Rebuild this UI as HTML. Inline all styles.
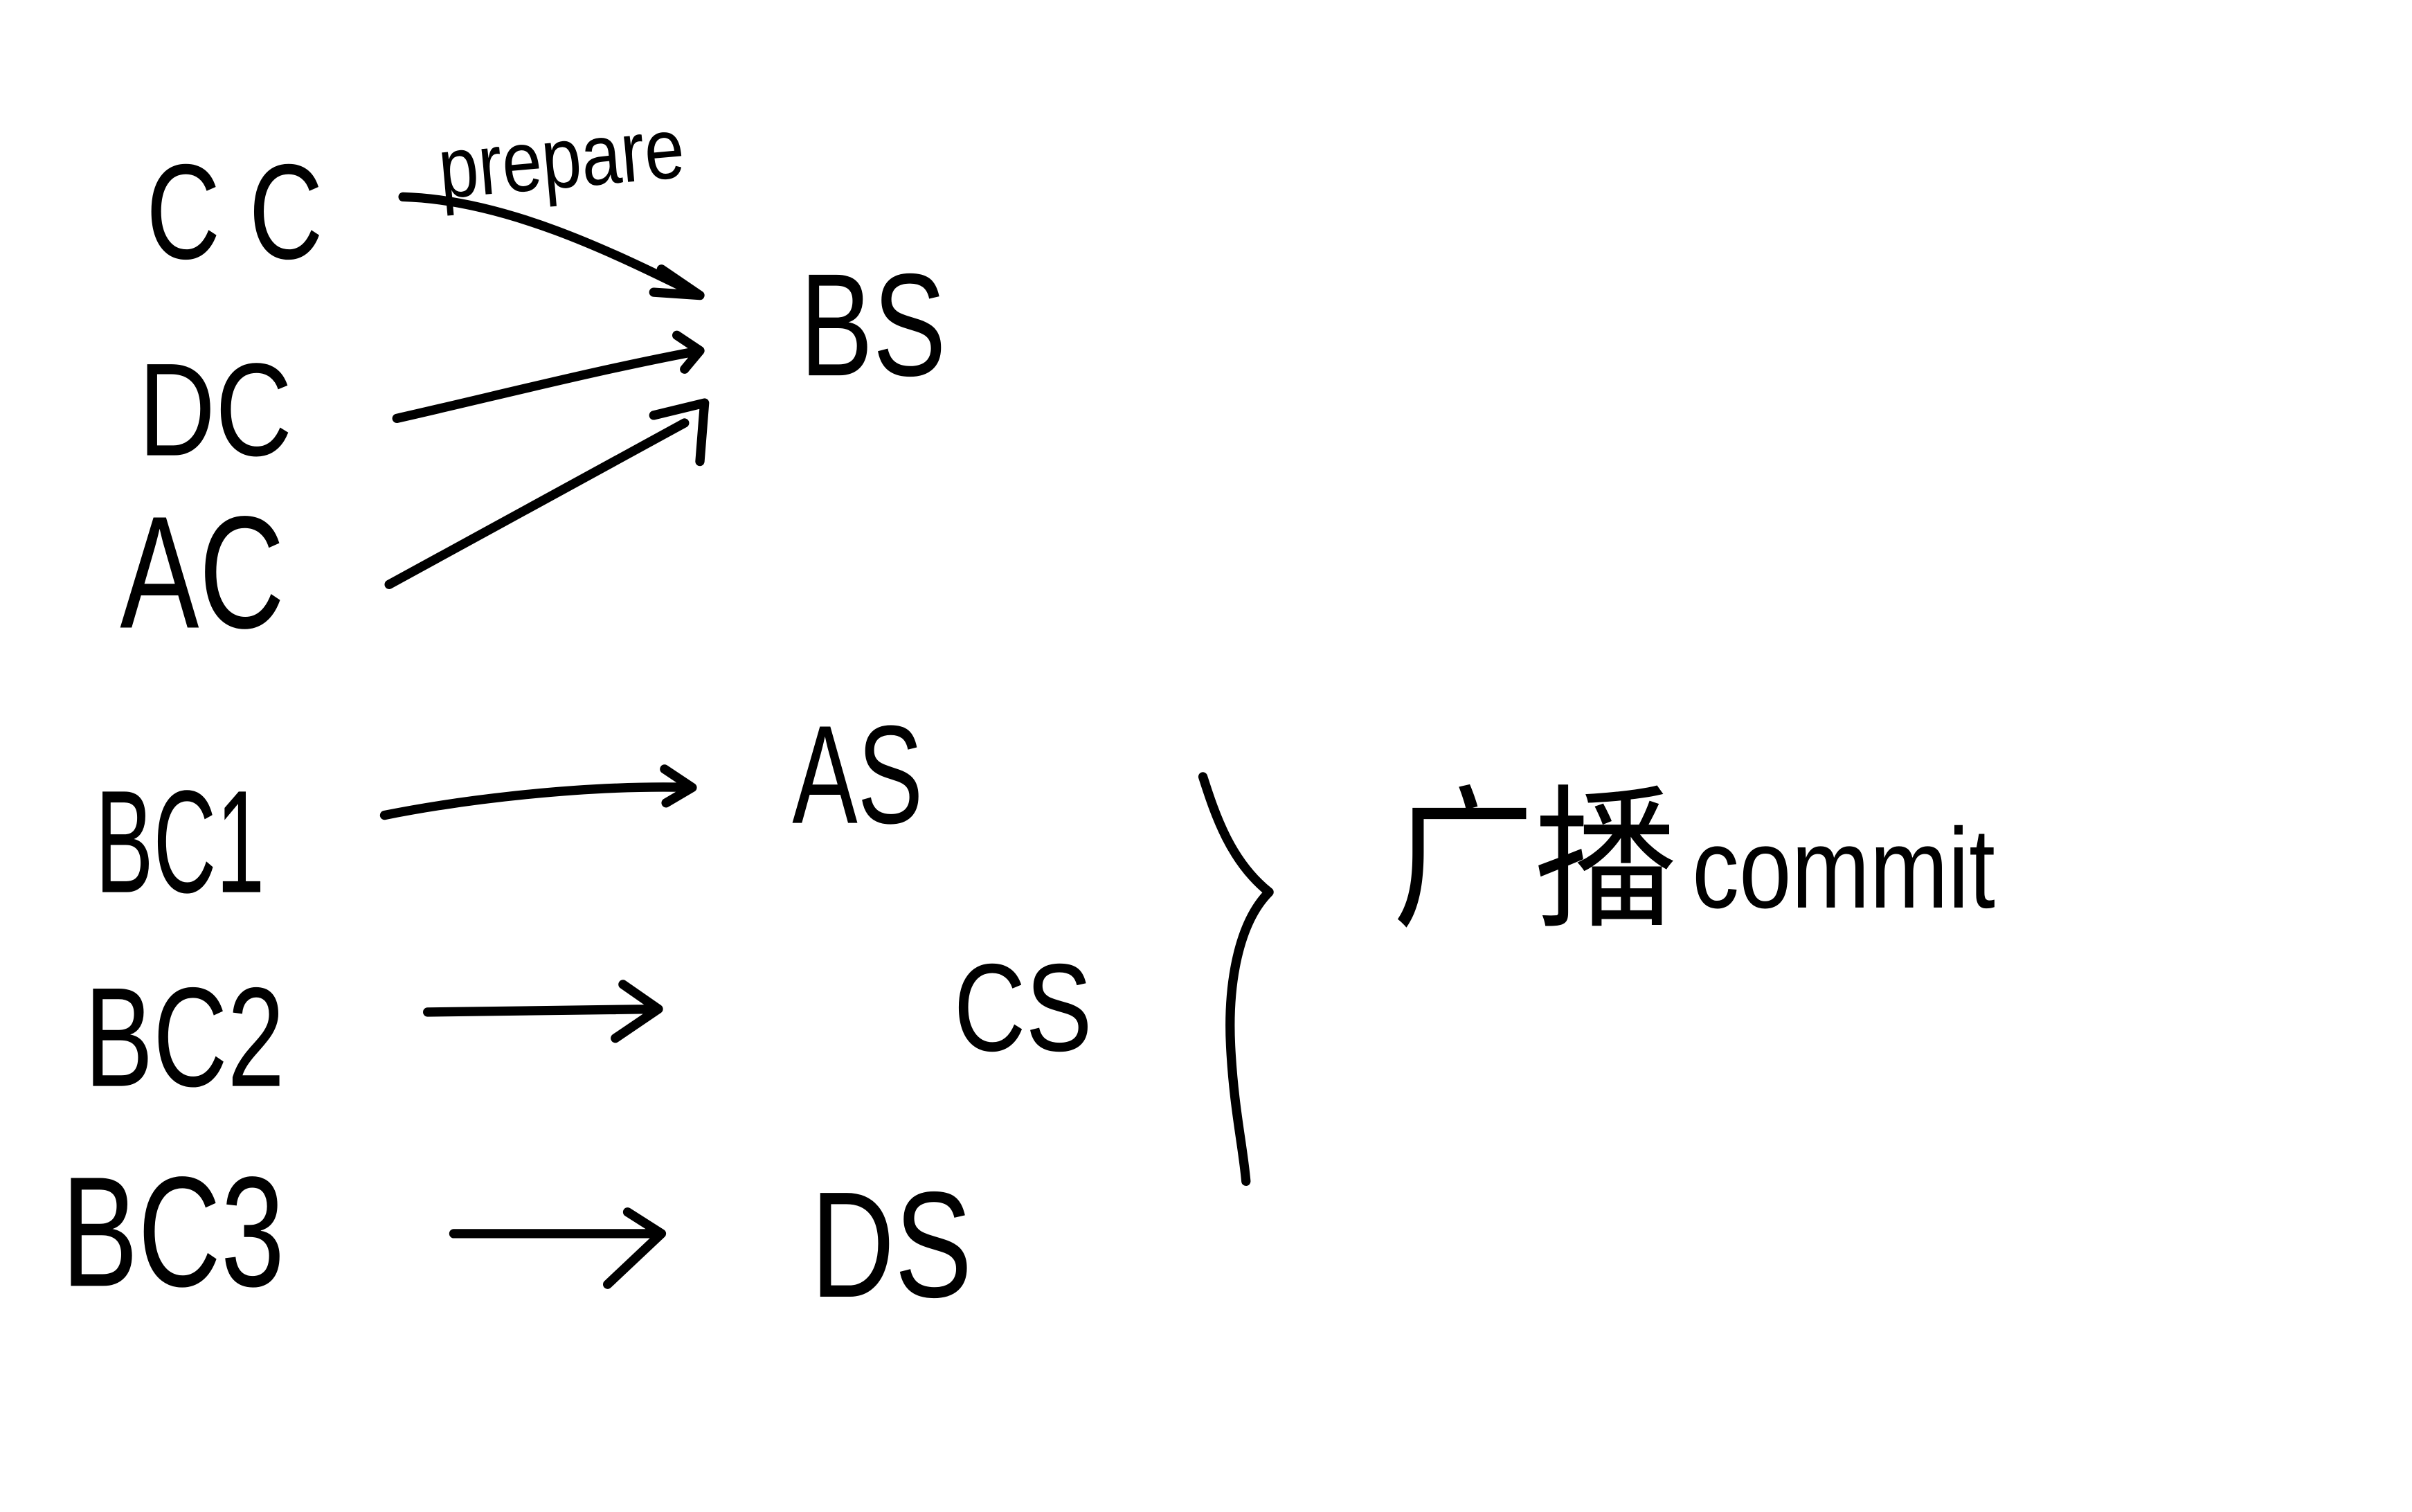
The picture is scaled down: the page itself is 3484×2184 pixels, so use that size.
<!DOCTYPE html>
<html><head><meta charset="utf-8"><style>
html,body{margin:0;padding:0;background:#fff;width:3484px;height:2184px;overflow:hidden}
svg{display:block}
text{font-family:"Liberation Sans","Noto Sans CJK SC",sans-serif;fill:#000;stroke:none}
</style></head><body>
<svg width="3484" height="2184" viewBox="0 0 1568 983" preserveAspectRatio="none">
<g>
<text x="95" y="168" font-size="88" textLength="115" lengthAdjust="spacingAndGlyphs">C C</text>
<text x="285" y="122" font-size="56" textLength="160" lengthAdjust="spacingAndGlyphs" transform="rotate(-5 365 105)">prepare</text>
<text x="520" y="244" font-size="95" textLength="95" lengthAdjust="spacingAndGlyphs">BS</text>
<text x="90" y="296" font-size="86" textLength="100" lengthAdjust="spacingAndGlyphs">DC</text>
<text x="78" y="408" font-size="104" textLength="107" lengthAdjust="spacingAndGlyphs">AC</text>
<text x="62" y="580" font-size="95" textLength="110" lengthAdjust="spacingAndGlyphs">BC1</text>
<text x="515" y="535" font-size="91" textLength="85" lengthAdjust="spacingAndGlyphs">AS</text>
<text x="55" y="706" font-size="92" textLength="130" lengthAdjust="spacingAndGlyphs">BC2</text>
<text x="620" y="683" font-size="81" textLength="90" lengthAdjust="spacingAndGlyphs">CS</text>
<text x="40" y="836" font-size="102" textLength="145" lengthAdjust="spacingAndGlyphs">BC3</text>
<text x="527" y="843" font-size="98" textLength="105" lengthAdjust="spacingAndGlyphs">DS</text>
<text x="905" y="594" font-size="100" textLength="185" lengthAdjust="spacingAndGlyphs">广播</text>
<text x="1100" y="590" font-size="74" textLength="197" lengthAdjust="spacingAndGlyphs">commit</text>
</g>
<g fill="none" stroke="#000" stroke-width="6" stroke-linecap="round" stroke-linejoin="round">
<path d="M262 128 C330 130 400 165 455 192 M430 175 L455 192 L425 190"/>
<path d="M258 272 C320 258 390 240 455 228 M440 218 L455 228 L445 240"/>
<path d="M253 380 L445 275 M425 270 L458 262 L455 300"/>
<path d="M250 530 C300 520 380 510 450 512 M432 500 L450 512 L433 522"/>
<path d="M278 658 L428 656 M405 640 L428 656 L400 675"/>
<path d="M295 802 L430 802 M408 788 L430 802 L395 835"/>
<path d="M782 505 C790 530 800 560 825 580 C805 600 798 640 800 680 C802 720 808 745 810 768"/>
</g>
</svg>
</body></html>
